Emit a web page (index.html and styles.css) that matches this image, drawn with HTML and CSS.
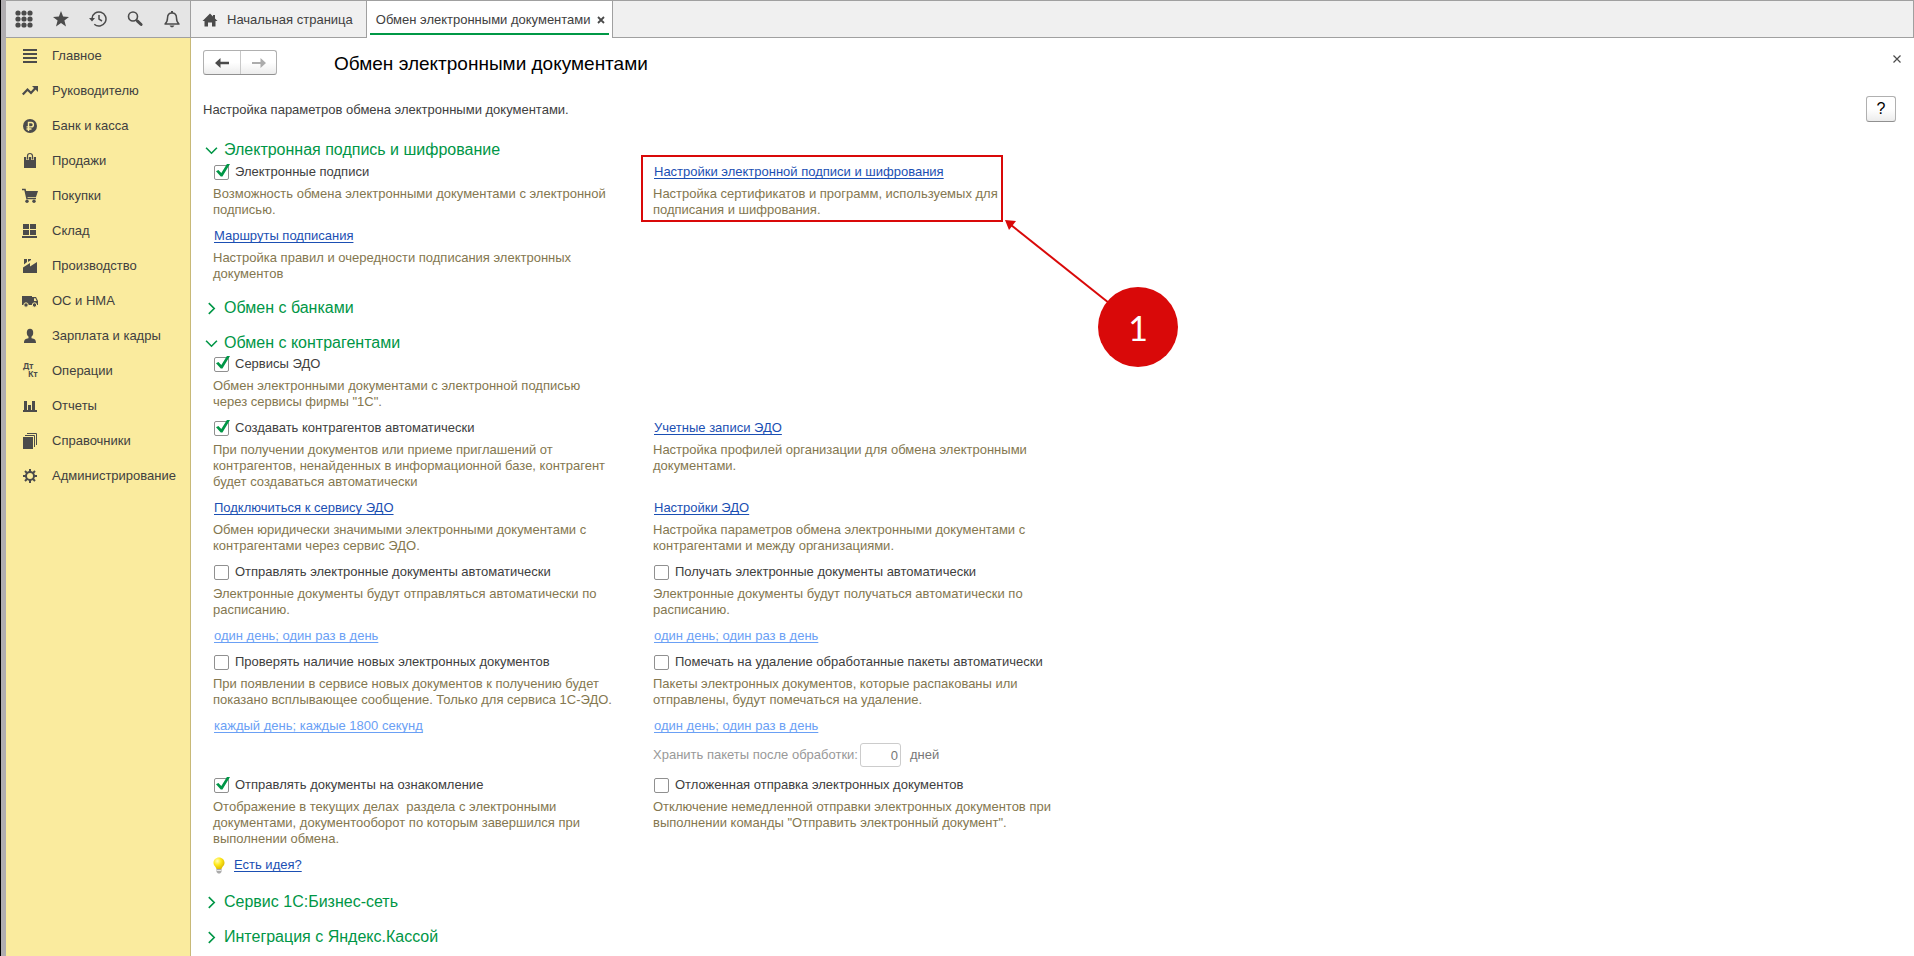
FILE: index.html
```html
<!DOCTYPE html>
<html lang="ru">
<head>
<meta charset="utf-8">
<title>Обмен электронными документами</title>
<link rel="stylesheet" href="styles.css">
</head>
<body>
<div class="app">
  <header class="topbar">
    <div class="tools">
      <button class="tool" aria-label="Меню"><svg width="18" height="18" viewBox="0 0 18 18"><g fill="#4b4b4b"><circle cx="3" cy="3" r="2.6"/><circle cx="9" cy="3" r="2.6"/><circle cx="15" cy="3" r="2.6"/><circle cx="3" cy="9" r="2.6"/><circle cx="9" cy="9" r="2.6"/><circle cx="15" cy="9" r="2.6"/><circle cx="3" cy="15" r="2.6"/><circle cx="9" cy="15" r="2.6"/><circle cx="15" cy="15" r="2.6"/></g></svg></button>
      <button class="tool" aria-label="Избранное"><svg width="18" height="18" viewBox="0 0 18 18"><path fill="#4b4b4b" d="M9 1l2.1 5.6 5.9.3-4.600 3.700 1.600 5.800L9 13.100l-5 3.300 1.600-5.800L1 6.900l5.900-.3z"/></svg></button>
      <button class="tool" aria-label="История"><svg width="18" height="18" viewBox="0 0 18 18"><g fill="none" stroke="#4b4b4b" stroke-width="1.5"><path d="M3 8.500a7 7 0 1 1 2.300 5.700"/><path d="M10 5v4.200l3 1.800"/></g><path fill="#4b4b4b" d="M0 8h6l-3 3.600z"/></svg></button>
      <button class="tool" aria-label="Поиск"><svg width="18" height="18" viewBox="0 0 18 18"><circle cx="7" cy="6.500" r="4.500" fill="none" stroke="#4b4b4b" stroke-width="1.600"/><path d="M10 9.500l2 2" stroke="#4b4b4b" stroke-width="1.500"/><path d="M11.500 11.200l3.600 3.300" stroke="#4b4b4b" stroke-width="3" stroke-linecap="round"/></svg></button>
      <button class="tool" aria-label="Уведомления"><svg width="18" height="18" viewBox="0 0 18 18"><path d="M2 14c2-1.600 2.500-3 2.500-6C4.500 4.500 6.500 3 9 3s4.500 1.500 4.500 5c0 3 .5 4.400 2.500 6z" fill="none" stroke="#4b4b4b" stroke-width="1.500" stroke-linejoin="round"/><path d="M8 1h2v2H8zM6.500 15.500h5L10 17.300H8z" fill="#4b4b4b"/></svg></button>
    </div>
    <nav class="tabs">
      <a class="tab home" href="#"><svg width="16" height="14" viewBox="0 0 16 14"><path fill="#4b4b4b" d="M8 .5L.5 8h2v5.500H6V9.500h4v4h3.500V8h2L13 5.500V2h-2v1.500z"/></svg>Начальная страница</a>
      <div class="tab active"><a class="tab-name" href="#">Обмен электронными документами</a><button class="tab-close" aria-label="Закрыть вкладку"><svg width="8" height="8" viewBox="0 0 8 8"><path d="M1 1l6 6M7 1L1 7" stroke="#4b4b4b" stroke-width="1.800"/></svg></button></div>
    </nav>
  </header>

  <div class="body">
    <nav class="sidebar">
      <a href="#"><svg viewBox="0 0 16 16"><path d="M1 2h14M1 6h14M1 10h14M1 14h14" stroke-width="2" stroke="#4b4b4b"/></svg>Главное</a>
      <a href="#"><svg viewBox="0 0 16 16"><path d="M.8 11.500L5.500 6.500l3.500 3.500 4.500-5" fill="none" stroke="#4b4b4b" stroke-width="2.200"/><path d="M10 3h6v6z" fill="#4b4b4b"/></svg>Руководителю</a>
      <a href="#"><svg viewBox="0 0 16 16"><circle cx="8" cy="8" r="7" fill="#4b4b4b"/><path d="M6.500 13V4.500h2.700a2.200 2.200 0 0 1 0 4.400H4.500M4.500 11h5" fill="none" stroke="#faeb9e" stroke-width="1.400"/></svg>Банк и касса</a>
      <a href="#"><svg viewBox="0 0 16 16"><path d="M2 4h12v11H2z" fill="#4b4b4b"/><path d="M5.500 7V3.500a2.500 2.500 0 0 1 5 0V7" fill="none" stroke="#faeb9e" stroke-width="2.600"/><path d="M5.500 6.500V3a2.500 2.500 0 0 1 5 0v3.500" fill="none" stroke="#4b4b4b" stroke-width="1.200"/></svg>Продажи</a>
      <a href="#"><svg viewBox="0 0 16 16"><path d="M0 1.500h3L5 10.500h9" fill="none" stroke="#4b4b4b" stroke-width="1.600"/><path d="M3.300 3H16l-2 6H4.600z" fill="#4b4b4b"/><circle cx="5" cy="13.300" r="1.700" fill="#4b4b4b"/><circle cx="12" cy="13.300" r="1.700" fill="#4b4b4b"/></svg>Покупки</a>
      <a href="#"><svg viewBox="0 0 16 16"><path fill="#4b4b4b" d="M1 1h6v5H1zM8 1h6v5H8zM1 7h6v5H1zM8 7h6v5H8zM0 13h15v2H0z"/></svg>Склад</a>
      <a href="#"><svg viewBox="0 0 16 16"><path fill="#4b4b4b" d="M1 15V9.500L8 5v3.500L15 4v11zM2 1h3v3L2 6.500zM6 1h3v1L6 4z"/></svg>Производство</a>
      <a href="#"><svg viewBox="0 0 16 16"><path fill="#4b4b4b" d="M0 3h10v9H0z"/><path fill="#4b4b4b" d="M10 4h4l2 4v4h-6z"/><path fill="#faeb9e" d="M12 5.200h1.500L14.700 8H12z"/><g fill="#4b4b4b" stroke="#faeb9e"><circle cx="4" cy="12" r="2.200"/><circle cx="12.500" cy="12" r="2.200"/></g></svg>ОС и НМА</a>
      <a href="#"><svg viewBox="0 0 16 16"><ellipse cx="8" cy="4.800" rx="3.200" ry="4" fill="#4b4b4b"/><path fill="#4b4b4b" d="M6.500 7h3v3.200c3 .4 4.500 1.300 4.500 4.800H2c0-3.500 1.500-4.400 4.500-4.800z"/></svg>Зарплата и кадры</a>
      <a href="#"><svg viewBox="0 0 16 16"><text class="dk" x="1" y="6">Дт</text><text class="dk" x="6" y="14">Кт</text></svg>Операции</a>
      <a href="#"><svg viewBox="0 0 16 16"><path fill="#4b4b4b" d="M2 3h3v9H2zM6 7h3v5H6zM10 3h3v9h-3zM1 12h14v2H1z"/></svg>Отчеты</a>
      <a href="#"><svg viewBox="0 0 16 16"><path fill="#4b4b4b" d="M1 4h10v12H1z"/><path d="M3 2.500h9.500V14M5 .5h9.500V12" fill="none" stroke="#4b4b4b"/></svg>Справочники</a>
      <a href="#"><svg viewBox="0 0 16 16"><circle cx="8" cy="8" r="4" fill="none" stroke="#4b4b4b" stroke-width="2"/><path d="M8 1v3M8 12v3M1 8h3M12 8h3M3 3l2.200 2.200M10.800 10.800L13 13M3 13l2.200-2.200M10.800 5.200L13 3" stroke="#4b4b4b" stroke-width="2"/></svg>Администрирование</a>
    </nav>

    <main class="content">
      <div class="head">
        <div class="history">
          <button aria-label="Назад"><svg width="14" height="10" viewBox="0 0 14 10"><path fill="#4b4b4b" d="M0 5l5.500-5v3.700H14v2.600H5.500V10z"/></svg></button>
          <button aria-label="Вперед"><svg width="14" height="10" viewBox="0 0 14 10"><path fill="#acacac" d="M14 5L8.500 0v3.900H0v2.200h8.500V10z"/></svg></button>
        </div>
        <h1>Обмен электронными документами</h1>
        <button class="close" aria-label="Закрыть"><svg width="8" height="8" viewBox="0 0 8 8"><path d="M.5.5l7 7M7.500.5l-7 7" stroke="#4b4b4b" stroke-width="1.200"/></svg></button>
      </div>
      <div class="intro">
        <p>Настройка параметров обмена электронными документами.</p>
        <button class="help">?</button>
      </div>

      <section>
        <h2><svg viewBox="0 0 12 12"><path d="M1 3.500l5 5 5-5"/></svg>Электронная подпись и шифрование</h2>
        <div class="grid">
          <div class="item">
            <label class="title"><input type="checkbox" checked>Электронные подписи</label>
            <p>Возможность обмена электронными документами с электронной<br>подписью.</p>
          </div>
          <div class="item marked">
            <div class="title"><a href="#">Настройки электронной подписи и шифрования</a></div>
            <p>Настройка сертификатов и программ, используемых для<br>подписания и шифрования.</p>
            <svg class="callout" width="540" height="214" viewBox="0 0 540 214">
              <rect x="1" y="1" width="360" height="65" fill="none" stroke="#d90909" stroke-width="2"/>
              <path d="M370 70l98 78" stroke="#d90909" stroke-width="2"/>
              <path d="M364 65l11 1-7 9z" fill="#d90909"/>
              <circle cx="497" cy="172" r="40" fill="#d90909"/>
              <text x="497" y="186" text-anchor="middle">1</text>
            </svg>
          </div>
          <div class="item">
            <div class="title"><a href="#">Маршруты подписания</a></div>
            <p>Настройка правил и очередности подписания электронных<br>документов</p>
          </div>
        </div>
      </section>

      <section>
        <h2><svg viewBox="0 0 12 12"><path d="M3.500 1l5 5-5 5"/></svg>Обмен с банками</h2>
      </section>

      <section>
        <h2><svg viewBox="0 0 12 12"><path d="M1 3.500l5 5 5-5"/></svg>Обмен с контрагентами</h2>
        <div class="grid partners">
          <div class="item wide">
            <label class="title"><input type="checkbox" checked>Сервисы ЭДО</label>
            <p>Обмен электронными документами с электронной подписью<br>через сервисы фирмы "1С".</p>
          </div>
          <div class="item">
            <label class="title"><input type="checkbox" checked>Создавать контрагентов автоматически</label>
            <p>При получении документов или приеме приглашений от<br>контрагентов, ненайденных в информационной базе, контрагент<br>будет создаваться автоматически</p>
          </div>
          <div class="item">
            <div class="title"><a href="#">Учетные записи ЭДО</a></div>
            <p>Настройка профилей организации для обмена электронными<br>документами.</p>
          </div>
          <div class="item">
            <div class="title"><a href="#">Подключиться к сервису ЭДО</a></div>
            <p>Обмен юридически значимыми электронными документами с<br>контрагентами через сервис ЭДО.</p>
          </div>
          <div class="item">
            <div class="title"><a href="#">Настройки ЭДО</a></div>
            <p>Настройка параметров обмена электронными документами с<br>контрагентами и между организациями.</p>
          </div>
          <div class="item">
            <label class="title"><input type="checkbox">Отправлять электронные документы автоматически</label>
            <p>Электронные документы будут отправляться автоматически по<br>расписанию.</p>
          </div>
          <div class="item">
            <label class="title"><input type="checkbox">Получать электронные документы автоматически</label>
            <p>Электронные документы будут получаться автоматически по<br>расписанию.</p>
          </div>
          <div class="title schedule"><a href="#">один день; один раз в день</a></div>
          <div class="title schedule"><a href="#">один день; один раз в день</a></div>
          <div class="item">
            <label class="title"><input type="checkbox">Проверять наличие новых электронных документов</label>
            <p>При появлении в сервисе новых документов к получению будет<br>показано всплывающее сообщение. Только для сервиса 1С-ЭДО.</p>
          </div>
          <div class="item">
            <label class="title"><input type="checkbox">Помечать на удаление обработанные пакеты автоматически</label>
            <p>Пакеты электронных документов, которые распакованы или<br>отправлены, будут помечаться на удаление.</p>
          </div>
          <div class="title schedule"><a href="#">каждый день; каждые 1800 секунд</a></div>
          <div class="title schedule"><a href="#">один день; один раз в день</a></div>
          <div class="keep">
            <label for="days">Хранить пакеты после обработки:</label>
            <input id="days" type="text" value="0" disabled>
            <span class="unit">дней</span>
          </div>
          <div class="item">
            <label class="title"><input type="checkbox" checked>Отправлять документы на ознакомление</label>
            <p>Отображение в текущих делах&nbsp; раздела с электронными<br>документами, документооборот по которым завершился при<br>выполнении обмена.</p>
          </div>
          <div class="item">
            <label class="title"><input type="checkbox">Отложенная отправка электронных документов</label>
            <p>Отключение немедленной отправки электронных документов при<br>выполнении команды "Отправить электронный документ".</p>
          </div>
          <div class="idea">
            <svg width="12" height="17" viewBox="0 0 12 17"><defs><radialGradient id="bulb" cx=".35" cy=".3" r=".75"><stop offset="0" stop-color="#fffcc0"/><stop offset=".45" stop-color="#ffea1c"/><stop offset="1" stop-color="#d9b400"/></radialGradient></defs><path d="M6 .5C2.800.5.500 2.800.500 5.800c0 3 2.500 3.700 3 6.400h5c.5-2.700 3-3.400 3-6.400C11.500 2.800 9.200.5 6 .5z" fill="url(#bulb)"/><path d="M3.500 12h5v3L7 16.500H5L3.500 15z" fill="#a9a9a9"/><path d="M4 13.500h4" stroke="#e8e8e8"/></svg>
            <a href="#">Есть идея?</a>
          </div>
        </div>
      </section>

      <section>
        <h2><svg viewBox="0 0 12 12"><path d="M3.500 1l5 5-5 5"/></svg>Сервис 1С:Бизнес-сеть</h2>
      </section>
      <section>
        <h2><svg viewBox="0 0 12 12"><path d="M3.500 1l5 5-5 5"/></svg>Интеграция с Яндекс.Кассой</h2>
      </section>
    </main>
  </div>
</div>
</body>
</html>
```
FILE: styles.css
```css
* { box-sizing: border-box; }
body {
  margin: 0;
  font: 13px/16px "Liberation Sans", Arial, sans-serif;
  color: #404040;
  background: #fff;
}
h1, h2, p { margin: 0; font-weight: normal; }
button { padding: 0; border: 0; background: none; font: inherit; color: inherit; }
a { color: inherit; text-decoration: none; }
svg { flex: none; }

.app {
  display: flex;
  flex-direction: column;
  min-height: 100vh;
  border-left: 1px solid #000;
  box-shadow: inset 5px 0 #b0adb0;
  padding-left: 5px;
}

.topbar {
  display: flex;
  height: 38px;
  border: solid #a0a0a0;
  border-width: 1px 1px 1px 0;
  background: #f0f0f0;
}
.tools {
  display: flex;
  align-items: center;
  gap: 19px;
  width: 185px;
  padding: 0 0 0 9px;
  border-right: 1px solid #a0a0a0;
  background: #e5e5e5;
}
.tool { display: flex; }
.tabs { display: flex; }
.tab { display: flex; align-items: center; padding-top: 2px; border-right: 1px solid #a0a0a0; }
.home { gap: 9px; padding-left: 11px; padding-right: 13px; }
.active {
  gap: 6px;
  margin-bottom: -1px;
  padding-left: 9px;
  padding-right: 7px;
  padding-bottom: 1px;
  background: linear-gradient(#009846, #009846) 3px 32px / calc(100% - 6px) 2px no-repeat #fff;
}
.tab-close { display: flex; }

.body { display: flex; flex: 1; }
.sidebar {
  display: flex;
  flex-direction: column;
  width: 185px;
  border-right: 1px solid #c8b978;
  background: #faeb9e;
}
.sidebar a { display: flex; align-items: center; gap: 14px; height: 35px; padding: 2px 0 1px 16px; }
.sidebar svg { width: 16px; height: 16px; overflow: visible; }
.dk { font: bold 8px "Noto Sans", sans-serif; fill: #4b4b4b; }

.content { flex: 1; padding: 12px 18px 0 12px; }
.head { display: flex; align-items: center; height: 25px; }
.history {
  display: flex;
  height: 25px;
  border: 1px solid #b0b0b0;
  border-bottom-color: #909090;
  border-radius: 3px;
  background: linear-gradient(#fff 50%, #ececec);
}
.history button { display: grid; place-items: center; width: 36px; }
.history button + button { border-left: 1px solid #c8c8c8; }
h1 { flex: 1; padding: 2px 0 0 57px; font-size: 19px; line-height: 22px; color: #000; }
.close { display: grid; place-items: center; width: 10px; height: 18px; margin-right: -6px; align-self: start; }

.intro { display: flex; align-items: center; justify-content: space-between; margin-top: 21px; }
.intro p { padding-top: 2px; }
.help {
  width: 30px;
  height: 26px;
  border: 1px solid #b0b0b0;
  border-bottom-color: #909090;
  border-radius: 3px;
  background: linear-gradient(#fff 50%, #ececec);
  font-size: 16px;
  color: #000;
}

section { margin-top: 15px; }
.intro + section { margin-top: 18px; }
h2 {
  display: flex;
  align-items: center;
  gap: 6px;
  padding-left: 2px;
  font-size: 16px;
  line-height: 20px;
  color: #009646;
}
h2 svg { width: 13px; height: 13px; fill: none; stroke: #009646; stroke-width: 1.5; }

.grid {
  display: grid;
  grid-template-columns: 440px 440px;
  row-gap: 9px;
  padding: 3px 0 1px 10px;
}
.partners { padding-top: 2px; }
.wide { grid-column: 1 / -1; }
.title { display: flex; align-items: center; gap: 6px; height: 18px; margin-left: 1px; }
.schedule { height: 17px; }
.item p { margin-top: 5px; color: #84774f; white-space: nowrap; }
.title a, .idea a {
  color: #1b4fb3;
  text-decoration: underline 1px;
  text-underline-offset: 2px;
  text-decoration-skip-ink: none;
}
.schedule a { color: #6aa0f5; }

input[type="checkbox"] {
  position: relative;
  appearance: none;
  flex: none;
  width: 15px;
  height: 15px;
  margin: 0;
  border: 1px solid #909090;
  border-radius: 2px;
  background: #fff;
}
input[type="checkbox"]:checked::after {
  content: "";
  position: absolute;
  top: -2px;
  left: 1px;
  width: 14px;
  height: 14px;
  background: #009646;
  clip-path: polygon(0 55%, 17% 46%, 38% 68%, 80% 0, 100% 3%, 46% 92%, 34% 92%);
}

.marked { position: relative; }
.callout { position: absolute; top: -8px; left: -12px; pointer-events: none; }
.callout text { font: 34px Lato, sans-serif; fill: #fff; }

.keep { grid-column: 2; display: flex; align-items: center; color: #999; }
.keep input {
  width: 41px;
  height: 24px;
  margin: 0 9px 0 2px;
  padding: 0 2px;
  border: 1px solid #ccc;
  border-radius: 3px;
  background: #fff;
  font: inherit;
  color: #777;
  text-align: right;
}
.unit { color: #777; }
.idea { grid-column: 1 / -1; display: flex; align-items: center; gap: 9px; height: 18px; margin-bottom: 2px; }
```
